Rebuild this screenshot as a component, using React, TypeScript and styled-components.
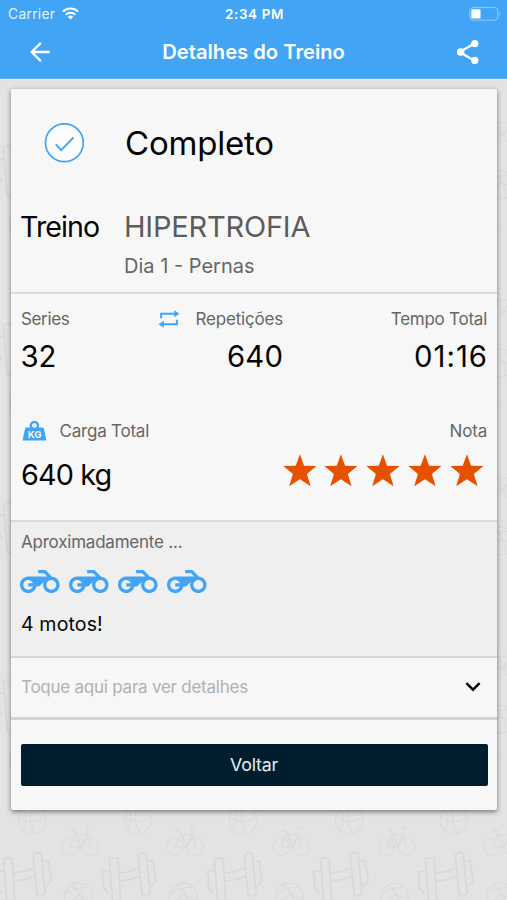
import React from 'react';
import styled, { createGlobalStyle } from 'styled-components';

const BLUE = '#42a4f5';

const patternTile = `
<svg xmlns="http://www.w3.org/2000/svg" width="105.6" height="178" viewBox="0 0 105.6 178" fill="none" stroke-linejoin="round" stroke-linecap="round">
  <g stroke-width="1.7" stroke="#d8d8d8">
    <path d="M3.5 61 Q8 59 12 61 L15 109 Q11 112 7 110 Z" transform="translate(0 9)"/>
    <path d="M33 66 Q37 62 41 65 L45 104 Q41 109 37 106 Z"/>
    <path d="M43 72 L48 72 L51 92 L46 97"/>
    <path d="M14 84 Q25 83 34 79 M15 92 Q26 91 35 87"/>
    <path d="M109 82 L103 82 Q100 83 103 86 L103 98 L107 104"/>
    <path d="M3.4 82 L-2.6 82 Q-5.6 83 -2.6 86 L-2.6 98 L1.4 104"/>
  </g>
  <g stroke-width="1" stroke="#d9d9d9">
    <circle cx="70" cy="58" r="8.5"/><circle cx="90" cy="58" r="8.5"/>
    <path d="M70 58 L75 46 L87 45 L82 58 Z M90 58 L86 39 L91 39 M82 58 L74 41 M75 43 L70 41"/>
    <circle cx="32" cy="31" r="14"/>
    <path d="M19 28 Q32 37 45 28 M32 17 Q27 30 35 45 M22 21 Q30 27 22 41"/>
    <circle cx="78" cy="108" r="14"/>
    <path d="M65 104 Q77 98 88 98 M71 96 Q84 104 83 121 M66 116 L78 106 L91 110"/>
    <path d="M10 143 Q20 132 30 143 L28 158 Q20 165 11 158 Z M60 135 L78 150 M58 139 L74 154"/>
  </g>
</svg>`;

const GlobalStyle = createGlobalStyle`
  * { box-sizing: border-box; }
  body {
    margin: 0;
    background: #e3e3e3;
    font-family: Inter, Roboto, "Liberation Sans", sans-serif;
  }
`;

const Screen = styled.div`
  height: 900px;
  overflow: hidden;
  background-color: #e3e3e3;
  background-image: url("data:image/svg+xml,${encodeURIComponent(patternTile)}");
  background-size: 105.6px 178px;
  background-position: 0 77px;
`;

const TopBar = styled.header`
  height: 79px;
  background: ${BLUE};
  color: #fff;
  border-bottom: 1px solid #64b5f6;
`;

const StatusBar = styled.div`
  display: grid;
  grid-template-columns: 1fr auto 1fr;
  align-items: center;
  height: 27px;
  padding: 0 6px 0 8px;
`;

const Carrier = styled.div`
  display: flex;
  align-items: center;
  gap: 7px;
`;

const BatterySlot = styled.div`
  display: flex;
  justify-content: flex-end;
`;

const NavBar = styled.nav`
  display: grid;
  grid-template-columns: 80px 1fr 80px;
  align-items: center;
  height: 50px;
`;

const NavButton = styled.button`
  display: flex;
  align-items: center;
  justify-content: center;
  height: 50px;
  padding: 0;
  border: 0;
  background: none;
  color: inherit;
`;

const Text = styled.div<{
  $size: number;
  $track?: number;
  $tone?: string;
  $weight?: number;
  $line?: number;
  $align?: string;
}>`
  font-size: ${(p) => p.$size}px;
  letter-spacing: ${(p) => p.$track ?? 0}px;
  color: ${(p) => p.$tone ?? '#050505'};
  font-weight: ${(p) => p.$weight ?? 400};
  line-height: ${(p) => p.$line ?? 24}px;
  text-align: ${(p) => p.$align ?? 'left'};
  white-space: nowrap;
`;

const Figure = styled(Text)`
  margin: 0 ${(p) => -(p.$track ?? 0)}px 0 -0.5px;
`;

const Card = styled.main`
  width: 486px;
  height: 721px;
  margin: 10px 0 0 11px;
  border-radius: 2px;
  background: #f7f7f7;
  box-shadow: 0 2px 4px rgba(0, 0, 0, 0.36), 0 1px 6px rgba(0, 0, 0, 0.16);
`;

const Summary = styled.section`
  height: 205px;
  border-bottom: 2px solid #dcdcdc;
`;

const StatusRow = styled.div`
  display: grid;
  grid-template-columns: 40px 1fr;
  column-gap: 41px;
  align-items: center;
  height: 108px;
  padding-left: 33px;
`;

const WorkoutRow = styled.div`
  display: grid;
  grid-template-columns: 104px 1fr;
  padding: 10px 0 0 9px;
`;

const Stats = styled.section`
  height: 228px;
  padding: 12px 10px 0;
  border-bottom: 2px solid #dadada;
`;

const StatGrid = styled.div`
  display: grid;
  grid-template-columns: 137px 125px 1fr;
  height: 112px;
`;

const LoadGrid = styled.div`
  display: grid;
  grid-template-columns: 1fr auto;
`;

const LabelRow = styled.div<{ $gap: number; $end?: boolean }>`
  display: flex;
  align-items: center;
  justify-content: ${(p) => (p.$end ? 'flex-end' : 'flex-start')};
  gap: ${(p) => p.$gap}px;
  height: 25px;
`;

const Stars = styled.div`
  display: flex;
  gap: 8px;
  padding: 11px 3.5px 0 0;
`;

const Equivalent = styled.section`
  height: 136px;
  padding: 8px 9px 0;
  background: #efefef;
  border-bottom: 2px solid #d6d6d6;
`;

const Caption = styled(Text)`
  padding-left: 1px;
`;

const Motos = styled.div`
  display: flex;
  gap: 9.4px;
  height: 47px;
  padding-top: 16px;
`;

const DetailsToggle = styled.section`
  display: flex;
  align-items: center;
  justify-content: space-between;
  height: 62px;
  padding: 0 16px 1px 10px;
  border-bottom: 3px solid #d2d2d2;
`;

const Footer = styled.footer`
  padding: 24px 9.5px 0;
`;

const BackButton = styled.button`
  display: flex;
  align-items: center;
  justify-content: center;
  width: 100%;
  height: 42px;
  padding: 0;
  border: 0;
  border-radius: 2px;
  background: #001e2e;
  font-family: inherit;
`;

const GREY = '#666';

const WifiIcon = () => (
  <svg width="17" height="13" viewBox="0 0 17 13" fill="none" stroke="#fff" strokeWidth="2">
    <path d="M1 4.6 A10.8 10.8 0 0 1 16 4.6" />
    <path d="M3.7 7.6 A6.9 6.9 0 0 1 13.3 7.6" />
    <path d="M8.5 12.6 L5.7 9.8 A4 4 0 0 1 11.3 9.8 Z" fill="#fff" stroke="none" />
  </svg>
);

const BatteryIcon = () => (
  <svg width="32" height="14" viewBox="0 0 32 14">
    <rect x="0.8" y="0.6" width="28" height="12.6" rx="3" fill="none" stroke="#92caf8" />
    <rect x="2.3" y="2.2" width="9.2" height="9.4" rx="1.2" fill="#fff" />
    <path d="M30.2 4.8 V9.2 Q32 7 30.2 4.8" fill="#92caf8" />
  </svg>
);

const ArrowIcon = () => (
  <svg width="20" height="20" viewBox="0 0 20 20" fill="none" stroke="#fff" strokeWidth="2.3">
    <path d="M19.8 10 H2 M10.8 0.9 L1.7 10 L10.8 19.1" />
  </svg>
);

const ShareIcon = () => (
  <svg width="24" height="26" viewBox="0 0 24 26" fill="#fff">
    <path d="M19 4.7 L4.6 13 L19 21.4" fill="none" stroke="#fff" strokeWidth="2.3" />
    <circle cx="19.8" cy="4.6" r="3.6" />
    <circle cx="5.6" cy="13" r="3.8" />
    <circle cx="19.8" cy="21.4" r="3.6" />
  </svg>
);

const CheckIcon = () => (
  <svg width="40" height="40" viewBox="0 0 40 40" fill="none" stroke={BLUE} strokeWidth="1.7">
    <circle cx="20.4" cy="19.7" r="18.9" fill="#fcfcfc" />
    <path d="M11.8 21.3 L17.2 27.2 L29.4 14.5" strokeWidth="1.9" />
  </svg>
);

const RepeatIcon = () => (
  <svg width="22" height="18" viewBox="0 0 22 18">
    <path d="M3.1 8.3 V3.8 H17 M18.9 9.8 V14.3 H5" fill="none" stroke={BLUE} strokeWidth="2" />
    <path d="M16.2 0.3 L21.5 3.8 L16.2 7.2 Z M5.8 10.8 L0.5 14.3 L5.8 17.8 Z" fill={BLUE} />
  </svg>
);

const WeightIcon = () => (
  <svg width="26" height="20" viewBox="-1 0 26 20">
    <circle cx="12.4" cy="4.6" r="3.6" fill="none" stroke={BLUE} strokeWidth="2.4" />
    <path d="M4.6 6.6 H20.3 Q21.6 6.6 22 8 L24.4 19.5 H0.5 L3 8 Q3.4 6.6 4.6 6.6 Z" fill={BLUE} />
    <circle cx="12.4" cy="4.6" r="2.1" fill="#f7f7f7" />
    <text x="12.5" y="16.8" textAnchor="middle" fontFamily="Inter, sans-serif" fontWeight="700" fontSize="9.6" fill="#f7f7f7">
      KG
    </text>
  </svg>
);

const StarIcon = () => (
  <svg width="33.8" height="32.6" viewBox="0 0 34 32.6">
    <path
      d="M17 0.2 L21.2 11.8 L33.7 12 L24 19.9 L27.8 32.3 L17 25.2 L6.2 32.3 L10 19.9 L0.3 12 L12.8 11.8 Z"
      fill="#e65100"
    />
  </svg>
);

const MotoIcon = () => (
  <svg width="39.6" height="23.1" viewBox="0 5 24 14" fill={BLUE}>
    <path d="M19.44 9.03L15.41 5H11v2h3.59l2 2H5c-2.8 0-5 2.2-5 5s2.2 5 5 5c2.46 0 4.45-1.69 4.9-4h1.65l2.77-2.77c-.21.54-.32 1.14-.32 1.77 0 2.8 2.2 5 5 5s5-2.2 5-5c0-2.65-1.97-4.77-4.56-4.97zM7.82 15C7.4 16.15 6.28 17 5 17c-1.63 0-3-1.37-3-3s1.37-3 3-3c1.28 0 2.4.85 2.82 2H5v2h2.82zM19 17c-1.66 0-3-1.34-3-3s1.34-3 3-3 3 1.34 3 3-1.34 3-3 3z" />
  </svg>
);

const ChevronIcon = () => (
  <svg width="16" height="10" viewBox="0 0 16 10" fill="none" stroke="#050505" strokeWidth="2.4">
    <path d="M1.4 1.2 L8 7.7 L14.6 1.2" />
  </svg>
);

export default function App() {
  return (
    <Screen>
      <GlobalStyle />
      <TopBar>
        <StatusBar>
          <Carrier>
            <Text $size={13.8} $track={0.3} $tone="#e3f2fe">Carrier</Text>
            <WifiIcon />
          </Carrier>
          <Text $size={13.4} $weight={600} $track={0.65} $tone="#fff">2:34 PM</Text>
          <BatterySlot>
            <BatteryIcon />
          </BatterySlot>
        </StatusBar>
        <NavBar>
          <NavButton aria-label="Voltar">
            <ArrowIcon />
          </NavButton>
          <Text $size={20.2} $weight={600} $tone="#fff" $align="center">Detalhes do Treino</Text>
          <NavButton aria-label="Compartilhar">
            <ShareIcon />
          </NavButton>
        </NavBar>
      </TopBar>

      <Card>
        <Summary>
          <StatusRow>
            <CheckIcon />
            <Text $size={33} $track={-0.2} $line={40}>Completo</Text>
          </StatusRow>
          <WorkoutRow>
            <Text $size={28.6} $track={-0.9} $line={40}>Treino</Text>
            <div>
              <Text $size={29} $track={-0.2} $line={40} $tone="#5c5c5c">HIPERTROFIA</Text>
              <Text $size={20} $line={38} $tone={GREY}>Dia 1 - Pernas</Text>
            </div>
          </WorkoutRow>
        </Summary>

        <Stats>
          <StatGrid>
            <div>
              <LabelRow $gap={0}>
                <Text $size={17} $track={-0.35} $tone={GREY}>Series</Text>
              </LabelRow>
              <Figure $size={29.3} $line={52}>32</Figure>
            </div>
            <div>
              <LabelRow $gap={15.5} $end>
                <RepeatIcon />
                <Text $size={17} $track={-0.2} $tone={GREY}>Repetições</Text>
              </LabelRow>
              <Figure $size={29.3} $track={0.2} $line={52} $align="right">640</Figure>
            </div>
            <div>
              <LabelRow $gap={0} $end>
                <Text $size={17} $track={-0.25} $tone={GREY}>Tempo Total</Text>
              </LabelRow>
              <Figure $size={29.3} $track={1} $line={52} $align="right">01:16</Figure>
            </div>
          </StatGrid>
          <LoadGrid>
            <div>
              <LabelRow $gap={12.5}>
                <WeightIcon />
                <Text $size={17} $track={-0.22} $tone={GREY}>Carga Total</Text>
              </LabelRow>
              <Text $size={28.8} $track={-0.9} $line={64}>640 kg</Text>
            </div>
            <div>
              <LabelRow $gap={0} $end>
                <Text $size={17} $track={-0.2} $tone={GREY}>Nota</Text>
              </LabelRow>
              <Stars>
                {[1, 2, 3, 4, 5].map((n) => (
                  <StarIcon key={n} />
                ))}
              </Stars>
            </div>
          </LoadGrid>
        </Stats>

        <Equivalent>
          <Caption $size={17} $track={-0.22} $tone={GREY}>Aproximadamente ...</Caption>
          <Motos>
            {[1, 2, 3, 4].map((n) => (
              <MotoIcon key={n} />
            ))}
          </Motos>
          <Caption $size={19.6} $track={0.1} $line={46}>4 motos!</Caption>
        </Equivalent>

        <DetailsToggle>
          <Text $size={17} $track={-0.24} $tone="#b1b1b1">Toque aqui para ver detalhes</Text>
          <ChevronIcon />
        </DetailsToggle>

        <Footer>
          <BackButton>
            <Text $size={17.8} $track={-0.2} $tone="#e8edf0">Voltar</Text>
          </BackButton>
        </Footer>
      </Card>
    </Screen>
  );
}
